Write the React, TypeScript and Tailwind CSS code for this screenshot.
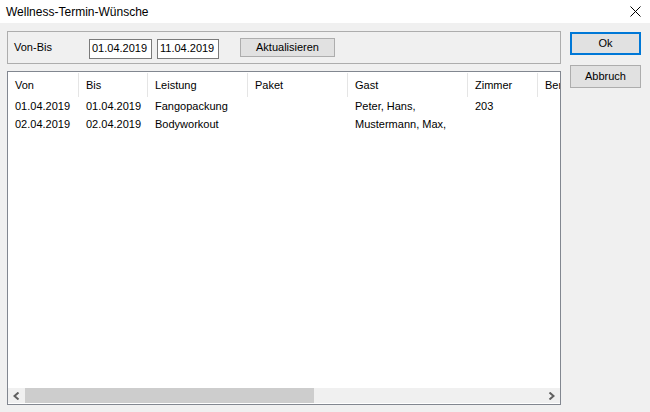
import React from "react";

const columns = [
  { label: "Von", width: 71 },
  { label: "Bis", width: 69 },
  { label: "Leistung", width: 100 },
  { label: "Paket", width: 100 },
  { label: "Gast", width: 120 },
  { label: "Zimmer", width: 70 },
  { label: "Bemerkung", width: 90 },
];

const rows = [
  ["01.04.2019", "01.04.2019", "Fangopackung", "", "Peter, Hans,", "203", ""],
  ["02.04.2019", "02.04.2019", "Bodyworkout", "", "Mustermann, Max,", "", ""],
];

const App = () => {
  return (
    <div
      className="w-[650px] h-[412px] bg-[#f0f0f0] flex flex-col text-[11px] text-black overflow-hidden"
      style={{ fontFamily: '"Liberation Sans", Arial, sans-serif' }}
    >
      {/* title bar */}
      <div className="h-[23px] bg-white flex items-center justify-between pl-[6px] pr-[8px] shrink-0">
        <span className="text-[12px]">Wellness-Termin-Wünsche</span>
        <svg width="11" height="11" viewBox="0 0 11 11" className="mr-[1px]">
          <path d="M0.5 0.5 L10.5 10.5 M10.5 0.5 L0.5 10.5" stroke="#000" strokeWidth="1" />
        </svg>
      </div>

      <div className="flex flex-1 pl-[7px] pt-[8px]">
        {/* left column */}
        <div className="w-[554px] flex flex-col">
          <div className="h-[33px] border border-[#adadad] flex items-center pl-[6px]">
            <span className="w-[75px]">Von-Bis</span>
            <div className="w-[63px] h-[20px] border border-[#7a7a7a] bg-white flex items-center pl-[2px] mt-[2px]">
              01.04.2019
            </div>
            <div className="w-[62px] h-[20px] border border-[#7a7a7a] bg-white flex items-center pl-[2px] ml-[5px] mt-[2px]">
              11.04.2019
            </div>
            <button className="w-[95px] h-[19px] border border-[#adadad] bg-[#e1e1e1] ml-[21px] flex items-center justify-center">
              Aktualisieren
            </button>
          </div>

          <div className="mt-[7px] h-[334px] border border-[#828790] bg-white flex flex-col">
            <div className="flex-1 overflow-hidden">
              <div className="flex h-[25px] items-center pt-[1px]">
                {columns.map((c, i) => (
                  <div
                    key={i}
                    className="shrink-0 h-full flex items-center pl-[7px] border-r border-[#e5e5e5] whitespace-nowrap overflow-hidden"
                    style={{ width: c.width }}
                  >
                    {c.label}
                  </div>
                ))}
              </div>
              {rows.map((r, ri) => (
                <div key={ri} className="flex h-[18px] items-center">
                  {r.map((cell, ci) => (
                    <div
                      key={ci}
                      className="shrink-0 pl-[7px] whitespace-nowrap"
                      style={{ width: columns[ci].width }}
                    >
                      {cell}
                    </div>
                  ))}
                </div>
              ))}
            </div>
            {/* horizontal scrollbar */}
            <div className="h-[15px] bg-[#f0f0f0] flex items-center mb-[1px]">
              <div className="w-[17px] flex items-center justify-center">
                <svg width="7" height="8" viewBox="0 0 7 8">
                  <path d="M5.5 0.5 L1.5 4 L5.5 7.5" stroke="#606060" strokeWidth="2" fill="none" />
                </svg>
              </div>
              <div className="w-[289px] h-full bg-[#cdcdcd]" />
              <div className="flex-1" />
              <div className="w-[17px] flex items-center justify-center">
                <svg width="7" height="8" viewBox="0 0 7 8">
                  <path d="M1.5 0.5 L5.5 4 L1.5 7.5" stroke="#606060" strokeWidth="2" fill="none" />
                </svg>
              </div>
            </div>
          </div>
        </div>

        {/* right column */}
        <div className="flex flex-col ml-[9px] pt-[1px] gap-[10px]">
          <button className="w-[71px] h-[23px] border-2 border-[#0078d7] bg-[#e1e1e1] flex items-center justify-center">
            Ok
          </button>
          <button className="w-[71px] h-[23px] border border-[#adadad] bg-[#e1e1e1] flex items-center justify-center">
            Abbruch
          </button>
        </div>
      </div>
    </div>
  );
};

export default App;
